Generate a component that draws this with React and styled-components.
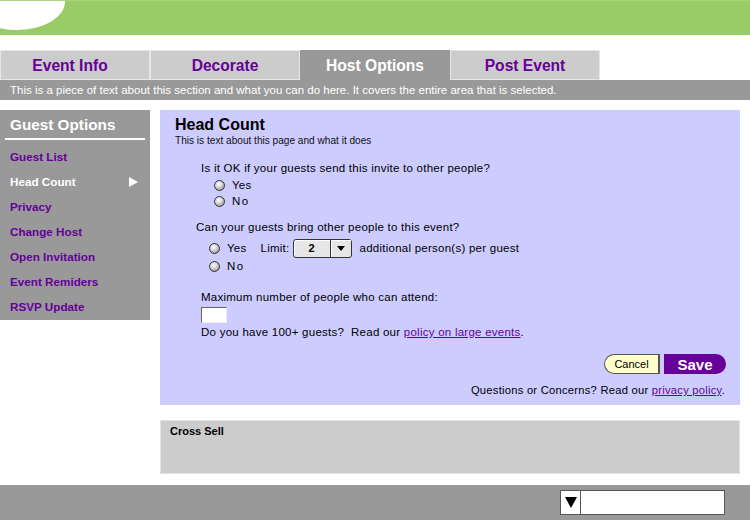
import React from "react";
import styled, { createGlobalStyle } from "styled-components";

const Global = createGlobalStyle`
  html, body { margin: 0; padding: 0; background: #ffffff; }
  body { font-family: "Liberation Sans", Arial, sans-serif; color: #000; }
  * { box-sizing: border-box; }
`;

const PURPLE = "#660099";

const Page = styled.div`
  width: 750px;
  height: 520px;
  overflow: hidden;
  display: flex;
  flex-direction: column;
`;

const Header = styled.header`
  position: relative;
  height: 35px;
  background: #99cc66;
  border-top: 1px solid #a9d47c;
  overflow: hidden;
  flex: none;
`;

const Blob = styled.span`
  position: absolute;
  left: -31px;
  top: -28px;
  width: 96px;
  height: 57px;
  border-radius: 50%;
  background: #ffffff;
`;

const Tabs = styled.nav`
  display: flex;
  margin-top: 15px;
  height: 30px;
  flex: none;
`;

const Tab = styled.div`
  width: 150px;
  height: 30px;
  display: flex;
  align-items: center;
  justify-content: center;
  padding-right: ${(p) => p.$shift || 0}px;
  padding-top: 2px;
  font-size: 15.6px;
  font-weight: bold;
  background: ${(p) => (p.$active ? "#999999" : "#cccccc")};
  color: ${(p) => (p.$active ? "#ffffff" : PURPLE)};
  border: 1px solid ${(p) => (p.$active ? "#999999" : "#e6e6e6")};
`;

const InfoBar = styled.div`
  height: 20px;
  background: #999999;
  color: #ffffff;
  font-size: 11.5px;
  line-height: 21px;
  padding-left: 10px;
  white-space: nowrap;
  flex: none;
`;

const Body = styled.div`
  display: flex;
  gap: 10px;
  padding-top: 10px;
  flex: none;
`;

const Sidebar = styled.aside`
  width: 150px;
  height: 210px;
  background: #999999;
  padding: 5px 5px 0 5px;
  align-self: flex-start;
`;

const SideTitle = styled.div`
  color: #ffffff;
  font-size: 15.3px;
  font-weight: bold;
  line-height: 20px;
  padding-left: 5px;
`;

const SideRule = styled.div`
  margin-top: 3px;
  height: 2px;
  background: #ffffff;
`;

const SideList = styled.ul`
  list-style: none;
  margin: 4px 0 0 0;
  padding: 0;
`;

const SideItem = styled.li`
  height: 25px;
  display: flex;
  align-items: center;
  justify-content: space-between;
  padding: 0 7px 0 5px;
  font-size: 11.7px;
  font-weight: bold;
  color: ${(p) => (p.$active ? "#ffffff" : PURPLE)};
`;

const Arrow = styled.span`
  width: 0;
  height: 0;
  border-top: 5px solid transparent;
  border-bottom: 5px solid transparent;
  border-left: 9px solid #ffffff;
`;

const Column = styled.div`
  width: 580px;
  display: flex;
  flex-direction: column;
`;

const Panel = styled.section`
  height: 295px;
  background: #ccccff;
  padding: 6px 14px 0 15px;
  display: flex;
  flex-direction: column;
`;

const Title = styled.h1`
  margin: 0;
  font-size: 16px;
  font-weight: bold;
  line-height: 18px;
`;

const Sub = styled.p`
  margin: 0;
  font-size: 10.1px;
  line-height: 14px;
  color: #111;
`;

const Section = styled.div`
  margin-left: ${(p) => p.$indent}px;
  margin-top: ${(p) => p.$top}px;
  font-size: 11.5px;
  letter-spacing: 0.25px;
`;

const Line = styled.div`
  line-height: 14px;
  margin-top: ${(p) => p.$top || 0}px;
  white-space: nowrap;
`;

const OptionRow = styled.div`
  display: flex;
  align-items: center;
  height: ${(p) => p.$h || 16}px;
  margin-top: ${(p) => p.$top || 0}px;
  padding-left: 13px;
  white-space: nowrap;
`;

const Radio = styled.span`
  width: 11px;
  height: 11px;
  border-radius: 50%;
  border: 1px solid #333;
  background: radial-gradient(circle at 40% 35%, #ffffff 0%, #e2e2e2 30%, #b0b0b0 65%, #808080 100%);
  margin-right: 7px;
  flex: none;
`;

const Label = styled.span`
  margin-left: ${(p) => p.$ml || 0}px;
  letter-spacing: ${(p) => p.$ls || 0.25}px;
`;

const Select = styled.div`
  margin-left: 3px;
  margin-right: 8px;
  width: 59px;
  height: 19px;
  border: 1px solid #333;
  border-radius: 3px;
  background: #e6e6e6;
  display: flex;
  box-shadow: inset 1px 1px 0 #ffffff;
  letter-spacing: 0;
`;

const SelectValue = styled.span`
  flex: 1;
  text-align: center;
  font-weight: bold;
  font-size: 11px;
  line-height: 17px;
`;

const SelectBtn = styled.span`
  width: 21px;
  border-left: 1px solid #333;
  display: flex;
  align-items: center;
  justify-content: center;
  box-shadow: inset 1px 1px 0 #ffffff;
`;

const DownTri = styled.span`
  width: 0;
  height: 0;
  border-left: ${(p) => p.$w / 2}px solid transparent;
  border-right: ${(p) => p.$w / 2}px solid transparent;
  border-top: ${(p) => p.$h}px solid #000;
`;

const TextBox = styled.div`
  margin-top: 3px;
  width: 26px;
  height: 16px;
  background: #ffffff;
  border-top: 1px solid #666;
  border-left: 1px solid #666;
  border-right: 1px solid #eee;
  border-bottom: 1px solid #eee;
`;

const Link = styled.a`
  color: ${PURPLE};
  text-decoration: underline;
`;

const Buttons = styled.div`
  margin-top: 15px;
  display: flex;
  justify-content: flex-end;
  gap: 4px;
`;

const CancelBtn = styled.button`
  width: 56px;
  height: 20px;
  padding: 0;
  background: #ffffcc;
  border: 1px solid #555;
  border-right-width: 2px;
  border-radius: 10px 0 0 10px;
  font-family: inherit;
  font-size: 11px;
  color: #000;
`;

const SaveBtn = styled.button`
  width: 62px;
  height: 20px;
  padding: 0;
  background: ${PURPLE};
  border: none;
  border-radius: 0 10px 10px 0;
  font-family: inherit;
  font-size: 15px;
  font-weight: bold;
  color: #ffffff;
`;

const Questions = styled.div`
  margin-top: 9px;
  text-align: right;
  font-size: 11.2px;
  letter-spacing: 0.25px;
  line-height: 14px;
  padding-right: 1px;
`;

const CrossSell = styled.section`
  margin-top: 15px;
  height: 54px;
  background: #cccccc;
  border: 1px solid #e3e3e3;
  padding: 4px 9px;
  font-size: 11px;
  font-weight: bold;
`;

const Footer = styled.footer`
  margin-top: 11px;
  height: 35px;
  background: #999999;
  padding: 5px 25px 0 560px;
  flex: none;
`;

const FootSelect = styled.div`
  width: 165px;
  height: 25px;
  background: #ffffff;
  border: 1px solid #555;
  display: flex;
`;

const FootArrow = styled.span`
  width: 20px;
  border-right: 1px solid #555;
  display: flex;
  align-items: center;
  justify-content: center;
`;

const menu = [
  "Guest List",
  "Head Count",
  "Privacy",
  "Change Host",
  "Open Invitation",
  "Event Remiders",
  "RSVP Update",
];

export default function App() {
  return (
    <>
      <Global />
      <Page>
        <Header>
          <Blob />
        </Header>
        <Tabs>
          <Tab $shift={10}>Event Info</Tab>
          <Tab>Decorate</Tab>
          <Tab $active>Host Options</Tab>
          <Tab>Post Event</Tab>
        </Tabs>
        <InfoBar>
          This is a piece of text about this section and what you can do here. It covers the entire area that is selected.
        </InfoBar>
        <Body>
          <Sidebar>
            <SideTitle>Guest Options</SideTitle>
            <SideRule />
            <SideList>
              {menu.map((m) => (
                <SideItem key={m} $active={m === "Head Count"}>
                  {m}
                  {m === "Head Count" && <Arrow />}
                </SideItem>
              ))}
            </SideList>
          </Sidebar>
          <Column>
            <Panel>
              <Title>Head Count</Title>
              <Sub>This is text about this page and what it does</Sub>
              <Section $indent={26} $top={13}>
                <Line>Is it OK if your guests send this invite to other people?</Line>
                <OptionRow $top={2}>
                  <Radio />
                  <Label>Yes</Label>
                </OptionRow>
                <OptionRow>
                  <Radio />
                  <Label $ls={1.5}>No</Label>
                </OptionRow>
              </Section>
              <Section $indent={21} $top={11}>
                <Line>Can your guests bring other people to this event?</Line>
                <OptionRow $top={4} $h={20}>
                  <Radio />
                  <Label>Yes</Label>
                  <Label $ml={14}>Limit:</Label>
                  <Select>
                    <SelectValue>2</SelectValue>
                    <SelectBtn>
                      <DownTri $w={9} $h={5} />
                    </SelectBtn>
                  </Select>
                  <Label>additional person(s) per guest</Label>
                </OptionRow>
                <OptionRow>
                  <Radio />
                  <Label $ls={1.5}>No</Label>
                </OptionRow>
              </Section>
              <Section $indent={26} $top={16}>
                <Line>Maximum number of people who can attend:</Line>
                <TextBox />
                <Line $top={2}>
                  Do you have 100+ guests?&nbsp; Read our <Link>policy on large events</Link>.
                </Line>
              </Section>
              <Buttons>
                <CancelBtn>Cancel</CancelBtn>
                <SaveBtn>Save</SaveBtn>
              </Buttons>
              <Questions>
                Questions or Concerns? Read our <Link>privacy policy</Link>.
              </Questions>
            </Panel>
            <CrossSell>Cross Sell</CrossSell>
          </Column>
        </Body>
        <Footer>
          <FootSelect>
            <FootArrow>
              <DownTri $w={12} $h={11} />
            </FootArrow>
          </FootSelect>
        </Footer>
      </Page>
    </>
  );
}
